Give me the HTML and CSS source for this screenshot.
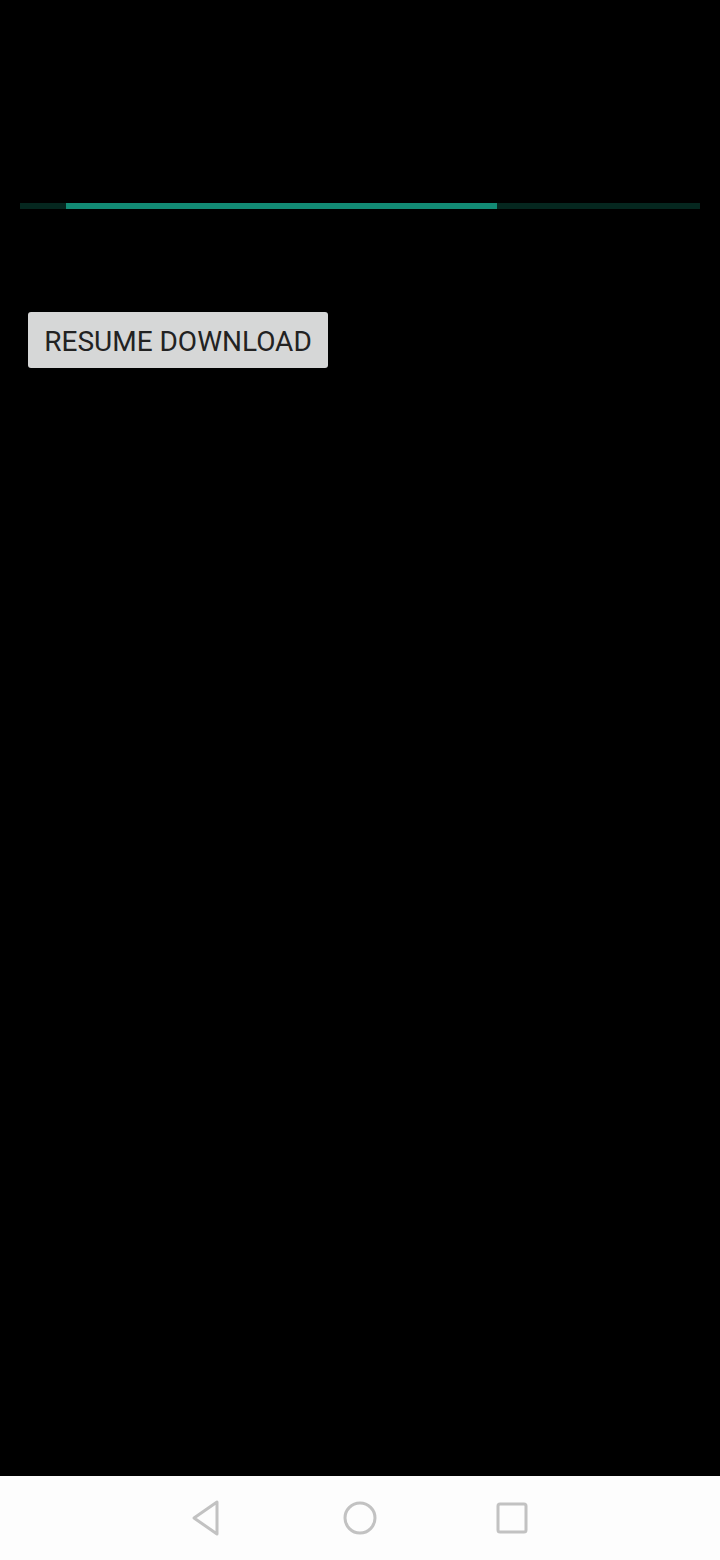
FILE: index.html
```html
<!DOCTYPE html>
<html>
<head>
<meta charset="utf-8">
<link rel="stylesheet" href="styles.css">
</head>
<body>
<div class="screen">
  <main class="content">
    <div class="progress">
      <div class="seg seg-dark" style="width:46px"></div>
      <div class="seg seg-bright" style="width:431px"></div>
      <div class="seg seg-dark seg-rest"></div>
    </div>
    <button class="btn">RESUME DOWNLOAD</button>
  </main>
  <nav class="navbar">
    <svg class="nav-icon" width="40" height="40" viewBox="0 0 40 40">
      <path d="M29 4 L29 36 L6 20 Z" fill="none" stroke="#c2c2c2" stroke-width="3" stroke-linejoin="round"/>
    </svg>
    <svg class="nav-icon" width="40" height="40" viewBox="0 0 40 40">
      <circle cx="20" cy="20" r="15" fill="none" stroke="#c2c2c2" stroke-width="3"/>
    </svg>
    <svg class="nav-icon" width="40" height="40" viewBox="0 0 40 40">
      <rect x="6" y="6" width="28" height="28" rx="2" fill="none" stroke="#c2c2c2" stroke-width="3"/>
    </svg>
  </nav>
</div>
</body>
</html>
```
FILE: styles.css
```css
html, body {
  margin: 0;
  padding: 0;
  background: #000;
}
.screen {
  width: 720px;
  height: 1560px;
  display: flex;
  flex-direction: column;
  background: #000;
}
.content {
  flex: 1;
  padding: 203px 20px 0 20px;
  display: flex;
  flex-direction: column;
  align-items: flex-start;
}
.progress {
  width: 680px;
  height: 6px;
  display: flex;
}
.seg { height: 100%; }
.seg-dark { background: #05271f; }
.seg-bright { background: #128a74; }
.seg-rest { flex: 1; }
.btn {
  margin: 103px 0 0 8px;
  width: 300px;
  height: 56px;
  background: #d6d7d7;
  border: none;
  border-radius: 3px;
  font-family: Roboto, "Noto Sans", sans-serif;
  font-weight: 400;
  font-size: 28px;
  color: #222;
  padding: 2px 0 0 0;
  display: flex;
  align-items: center;
  justify-content: center;
}
.navbar {
  height: 84px;
  background: #fdfdfd;
  display: flex;
  align-items: center;
  justify-content: center;
  gap: 112px;
}
.nav-icon { display: block; }
```
